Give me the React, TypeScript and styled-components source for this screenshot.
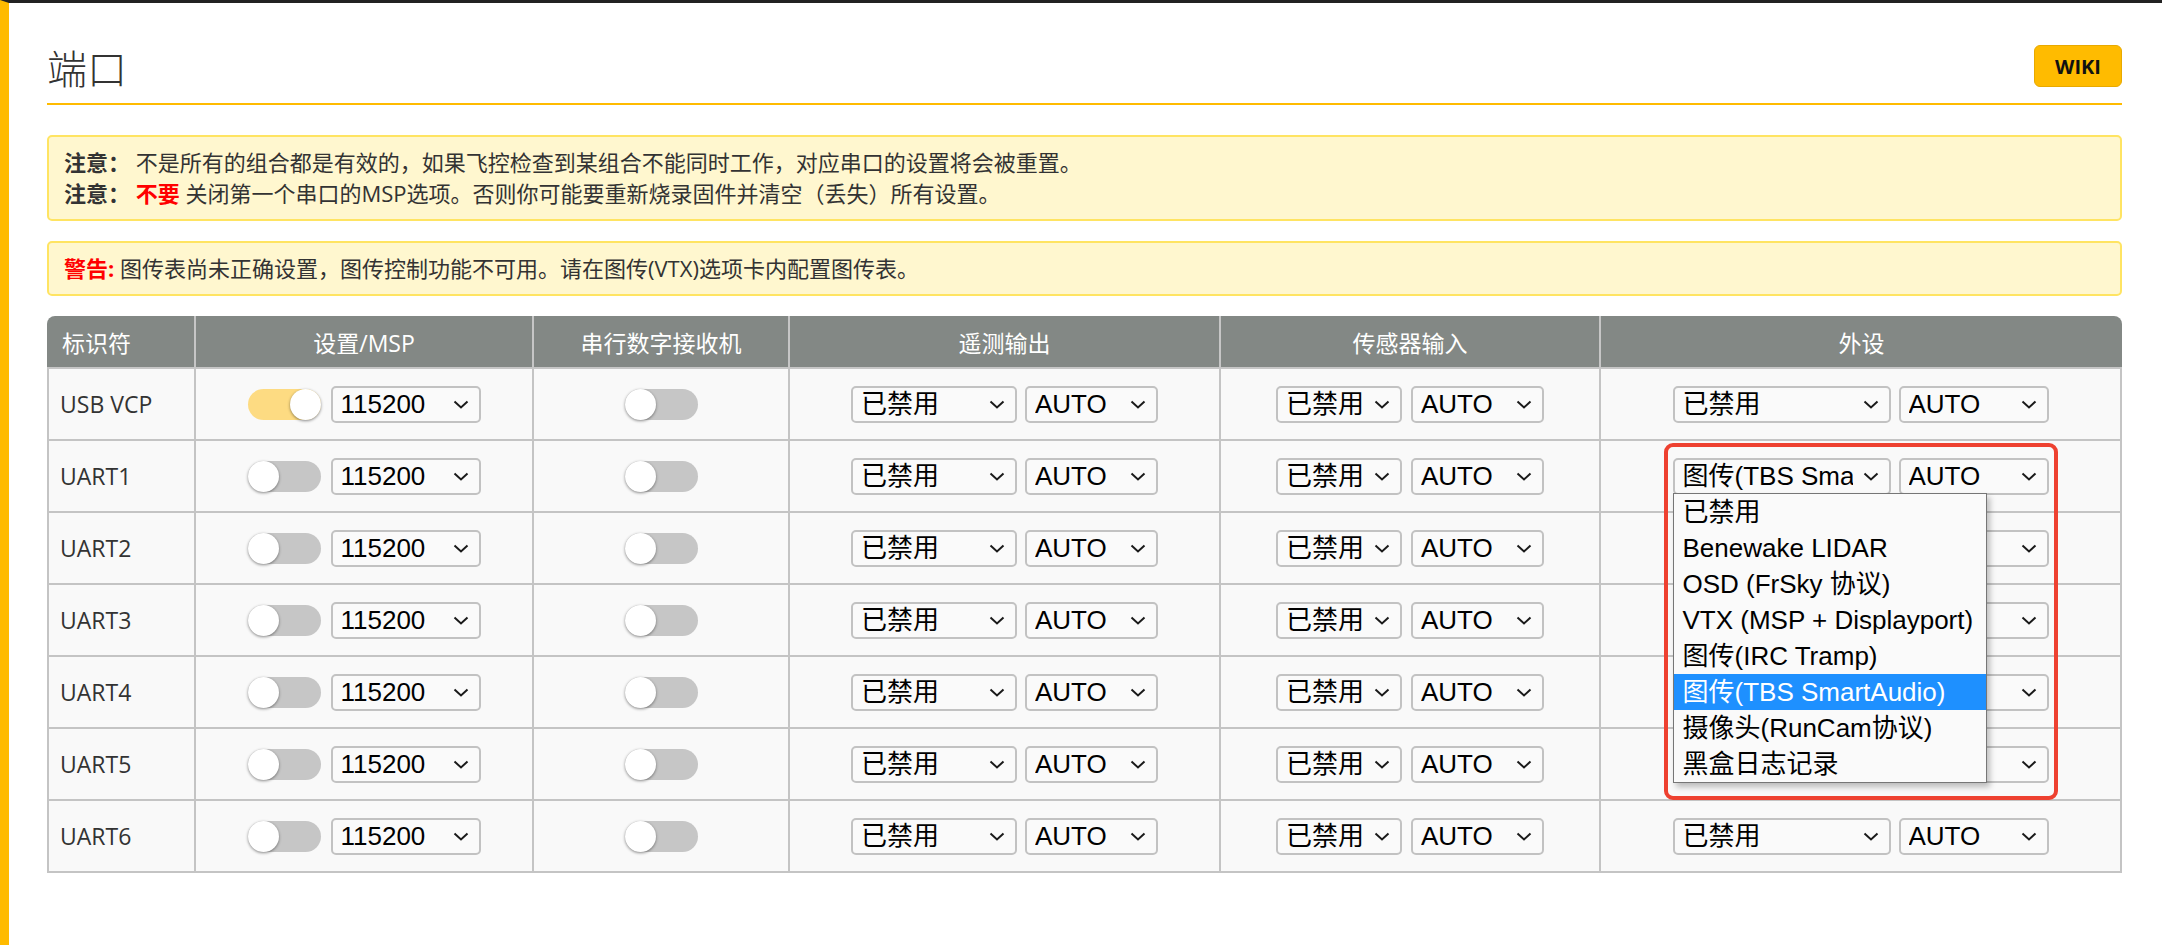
import React from 'react';
import styled, {createGlobalStyle} from 'styled-components';

const GlobalStyle = createGlobalStyle`
  html, body {
    margin: 0;
    padding: 0;
    background: #fff;
  }

  body {
    font-family: "Open Sans", "Noto Sans CJK SC", sans-serif;
    color: #333;
  }

  * {
    box-sizing: border-box;
  }
`

const COLS = '149px 338px 256px 431px 380px 1fr'

const ports = ['USB VCP', 'UART1', 'UART2', 'UART3', 'UART4', 'UART5', 'UART6']

const peripheralOptions = [
    '已禁用',
    'Benewake LIDAR',
    'OSD (FrSky 协议)',
    'VTX (MSP + Displayport)',
    '图传(IRC Tramp)',
    '图传(TBS SmartAudio)',
    '摄像头(RunCam协议)',
    '黑盒日志记录',
]

const Chevron = () => (
    <svg width="16" height="9" viewBox="0 0 16 9">
        <polyline points="1.5,1.5 8,7.5 14.5,1.5" fill="none" stroke="#1a1a1a" strokeWidth="2"/>
    </svg>
)

const Select = ({width, value, children}: { width: number, value: string, children?: React.ReactNode }) => (
    <SelectBox $w={width}>
        <SelectValue>{value}</SelectValue>
        <Chevron/>
        {children}
    </SelectBox>
)

const Toggle = ({on}: { on?: boolean }) => (
    <Track $on={on}>
        <Knob/>
    </Track>
)

export default function App() {
    return (
        <>
            <GlobalStyle/>
            <Page>
                <HeaderRow>
                    <Title>端口</Title>
                    <WikiButton>WIKI</WikiButton>
                </HeaderRow>

                <Note>
                    <b>注意：</b> 不是所有的组合都是有效的，如果飞控检查到某组合不能同时工作，对应串口的设置将会被重置。<br/>
                    <b>注意：</b> <Red>不要</Red> 关闭第一个串口的MSP选项。否则你可能要重新烧录固件并清空（丢失）所有设置。
                </Note>

                <Warning>
                    <Red>警告:</Red> 图传表尚未正确设置，图传控制功能不可用。请在图传(VTX)选项卡内配置图传表。
                </Warning>

                <PortsTable>
                    <HeadRow>
                        <HeadCell $left>标识符</HeadCell>
                        <HeadCell>设置/MSP</HeadCell>
                        <HeadCell>串行数字接收机</HeadCell>
                        <HeadCell>遥测输出</HeadCell>
                        <HeadCell>传感器输入</HeadCell>
                        <HeadCell>外设</HeadCell>
                    </HeadRow>

                    {ports.map((port, index) => (
                        <Row key={`port_${port}`}>
                            <Cell $left>{port}</Cell>
                            <Cell $gap={10}>
                                <Toggle on={index === 0}/>
                                <Select width={150} value="115200"/>
                            </Cell>
                            <Cell>
                                <Toggle/>
                            </Cell>
                            <Cell>
                                <Select width={166} value="已禁用"/>
                                <Select width={133} value="AUTO"/>
                            </Cell>
                            <Cell $gap={9}>
                                <Select width={126} value="已禁用"/>
                                <Select width={133} value="AUTO"/>
                            </Cell>
                            <Cell>
                                {port === 'UART1' ? (
                                    <Group>
                                        <Select width={218} value="图传(TBS SmartAudio)">
                                            <OptionList>
                                                {peripheralOptions.map(option => (
                                                    <Option key={option} $active={option === '图传(TBS SmartAudio)'}>
                                                        {option}
                                                    </Option>
                                                ))}
                                            </OptionList>
                                        </Select>
                                        <Select width={150} value="AUTO"/>
                                        <Highlight/>
                                    </Group>
                                ) : (
                                    <>
                                        <Select width={218} value="已禁用"/>
                                        <Select width={150} value="AUTO"/>
                                    </>
                                )}
                            </Cell>
                        </Row>
                    ))}
                </PortsTable>
            </Page>
        </>
    )
}

const Page = styled.div`
  min-height: 945px;
  border-top: 3px solid #222;
  border-left: 9px solid #ffbb00;
  padding: 42px 40px 40px 38px;
`

const HeaderRow = styled.div`
  display: flex;
  align-items: flex-start;
  justify-content: space-between;
  padding-bottom: 10px;
  border-bottom: 2px solid #ffbb00;
`

const Title = styled.h1`
  margin: 0;
  font-size: 40px;
  line-height: 48px;
  font-weight: 300;
  color: #333;
`

const WikiButton = styled.button`
  width: 88px;
  height: 42px;
  background: #ffbb00;
  border: 1px solid #e8a900;
  border-radius: 6px;
  font-family: "Open Sans", sans-serif;
  font-size: 20px;
  font-weight: 700;
  color: #111;
  padding: 0;
`

const Note = styled.div`
  margin-top: 30px;
  background: #fff7cf;
  border: 2px solid #ffe462;
  border-radius: 5px;
  padding: 10px 15px;
  font-size: 22px;
  line-height: 31px;
  color: #333;

  b {
    font-weight: 700;
  }
`

const Warning = styled(Note)`
  margin-top: 20px;
`

const Red = styled.b`
  color: #ff0000;
  font-weight: 700;
`

const PortsTable = styled.div`
  margin-top: 20px;
`

const HeadRow = styled.div`
  display: grid;
  grid-template-columns: ${COLS};
`

const HeadCell = styled.div<{ $left?: boolean }>`
  height: 53px;
  display: flex;
  align-items: center;
  justify-content: ${p => p.$left ? 'flex-start' : 'center'};
  padding-left: ${p => p.$left ? '15px' : '0'};
  background: #838885;
  color: #fff;
  font-size: 23px;
  border-bottom: 2px solid #c6c6c6;
  border-right: 2px solid #c6c6c6;

  &:first-child {
    border-top-left-radius: 8px;
  }

  &:last-child {
    border-right: none;
    border-top-right-radius: 8px;
  }
`

const Row = styled.div`
  display: grid;
  grid-template-columns: ${COLS};
`

const Cell = styled.div<{ $left?: boolean, $gap?: number }>`
  position: relative;
  height: 72px;
  display: flex;
  align-items: center;
  justify-content: ${p => p.$left ? 'flex-start' : 'center'};
  gap: ${p => p.$gap ?? 8}px;
  padding-left: ${p => p.$left ? '11px' : '0'};
  background: #f9f9f9;
  border-right: 2px solid #c4c4c4;
  border-bottom: 2px solid #c4c4c4;
  font-size: 23px;
  color: #333;

  &:first-child {
    border-left: 2px solid #c4c4c4;
  }
`

const Track = styled.span<{ $on?: boolean }>`
  flex: none;
  width: 73px;
  height: 31px;
  border-radius: 16px;
  display: flex;
  justify-content: ${p => p.$on ? 'flex-end' : 'flex-start'};
  background: ${p => p.$on ? '#fddb82' : '#c6c6c6'};
`

const Knob = styled.span`
  width: 31px;
  height: 31px;
  border-radius: 50%;
  background: #fff;
  box-shadow: 0 1px 3px rgba(0, 0, 0, 0.45);
`

const SelectBox = styled.div<{ $w: number }>`
  position: relative;
  flex: none;
  width: ${p => p.$w}px;
  height: 37px;
  display: flex;
  align-items: center;
  gap: 10px;
  padding: 0 10px 0 8px;
  border: 2px solid #c2c2c2;
  border-radius: 5px;
  background: #fafafa;
  font-family: "Liberation Sans", "Noto Sans CJK SC", sans-serif;
  font-size: 26px;
  color: #000;
`

const SelectValue = styled.span`
  flex: 1;
  overflow: hidden;
  white-space: nowrap;
  line-height: 33px;
`

const Group = styled.div`
  position: relative;
  display: flex;
  gap: 8px;
`

const OptionList = styled.ul`
  position: absolute;
  top: 100%;
  left: -2px;
  z-index: 20;
  width: 314px;
  margin: 0;
  padding: 0;
  list-style: none;
  background: #fafafa;
  border: 1px solid #767676;
  box-shadow: 3px 4px 6px rgba(0, 0, 0, 0.25);
`

const Option = styled.li<{ $active?: boolean }>`
  height: 36px;
  line-height: 36px;
  padding-left: 9px;
  white-space: nowrap;
  background: ${p => p.$active ? '#1e90ff' : 'transparent'};
  color: ${p => p.$active ? '#fff' : '#000'};
`

const Highlight = styled.div`
  position: absolute;
  left: -9px;
  top: -15px;
  width: calc(100% + 18px);
  height: 357px;
  border: 4px solid #ee4130;
  border-radius: 9px;
  pointer-events: none;
  z-index: 30;
`
